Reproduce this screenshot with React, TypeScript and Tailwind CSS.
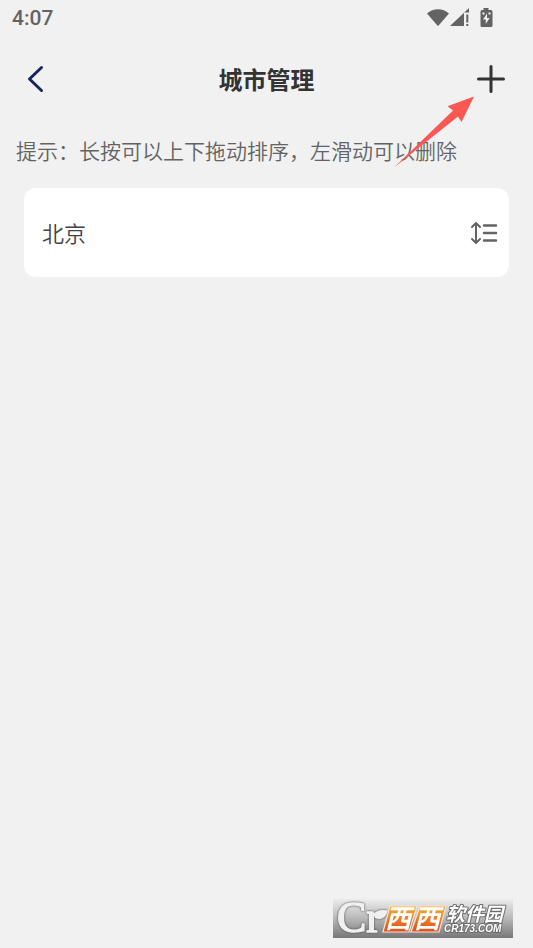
import React from 'react';

const cities = ['北京'];

const StatusBar: React.FC = () => (
  <div className="flex h-9 items-center justify-between pl-3 pr-[39px] text-[#636363]">
    <span className="font-[Roboto,'Noto_Sans',sans-serif] text-[21px] font-medium leading-9">4:07</span>
    <div className="flex items-center" aria-hidden="true">
      <svg className="h-5 w-6" viewBox="0 0 24 20" fill="currentColor">
        <path d="M1 5.600C7-.2 17-.2 23 5.600L12.600 17.600a.8.8 0 0 1-1.200 0Z" />
      </svg>
      <svg className="mr-2 h-5 w-5" viewBox="0 0 20 20" fill="currentColor">
        <path d="M0 18 19 0v4.500h-5V18Z" />
        <path d="M16.300 6.500h2v8h-2zM16.300 16h2v2h-2z" />
      </svg>
      <svg className="h-5 w-4" viewBox="0 0 16 20" fill="currentColor">
        <path
          fillRule="evenodd"
          d="M5.500 0h5v2H13q1.500 0 1.500 1.500v14q0 1.500-1.500 1.500H4q-1.500 0-1.500-1.500v-14Q2.500 2 4 2h1.500ZM4.500 4.500v2h2v-2Zm6 0v2h2v-2ZM9 5.500 5 11.500h2.800V16l3.800-6H9Z"
        />
      </svg>
    </div>
  </div>
);

const SortIcon: React.FC = () => (
  <svg className="h-6 w-7" viewBox="0 0 28 24" fill="none" stroke="#636363" strokeLinecap="round" strokeLinejoin="round">
    <path strokeWidth="2" d="M6 2v20M2 6l4-4 4 4M2 18l4 4 4-4" />
    <path strokeWidth="2.400" d="M14 4.500h12M14 12h12M14 19.500h12" />
  </svg>
);

const PointerArrow: React.FC = () => (
  <svg className="pointer-events-none absolute right-[59px] top-[60px] h-[72px] w-20" viewBox="0 0 80 72" fill="#fb5753" aria-hidden="true">
    <path d="M80 .5 53.500 10.200 59 14.500 0 71.500 64 20.500 67.500 26Z" />
  </svg>
);

const Watermark: React.FC = () => (
  <svg className="pointer-events-none fixed bottom-[10px] right-5 h-10 w-[180px] overflow-visible" viewBox="0 0 180 40">
    <defs>
      <linearGradient id="plate" x1="0" y1="0" x2="0" y2="1">
        <stop offset="0" stopColor="#f0f0f0" />
        <stop offset="0.5" stopColor="#b9b9b9" />
        <stop offset="1" stopColor="#777" />
      </linearGradient>
      <linearGradient id="tile" x1="0" y1="0" x2="0" y2="1">
        <stop offset="0" stopColor="#f6ae2b" />
        <stop offset="1" stopColor="#e34b1d" />
      </linearGradient>
    </defs>
    <rect width="180" height="40" fill="url(#plate)" />
    <g className="drop-shadow-[0_0_1px_#444]" fill="#f0f0f0" stroke="#f0f0f0" strokeWidth="1.500" strokeLinejoin="round">
      <text x="4" y="34" fontSize="44" fontFamily="'Liberation Serif', serif">Cr</text>
      <path d="M42 19c1-6 5-7 12-6-2 6-6 9-12 6Z" />
    </g>
    <g fill="url(#tile)" stroke="#f5e7d8" strokeWidth="1.200">
      <path d="M57 8h27l-8 26H50Z" />
      <path d="M87 8h26l-7 26H78Z" />
    </g>
    <g fill="#fff" fontFamily="'Noto Sans CJK SC', sans-serif" fontStyle="italic" fontWeight="700">
      <text x="52" y="30" fontSize="26">西</text>
      <text x="81" y="30" fontSize="26">西</text>
      <g stroke="#6c6c6c" strokeWidth="2" paintOrder="stroke" strokeLinejoin="round">
        <text x="113" y="23" fontSize="19">软件园</text>
        <text x="111" y="34" fontSize="10" fontFamily="'Liberation Sans', sans-serif">CR173.COM</text>
      </g>
    </g>
  </svg>
);

const App: React.FC = () => {
  return (
    <div className="min-h-screen bg-[#f1f1f1] font-['Noto_Sans_CJK_SC',sans-serif] text-[#333]">
      <StatusBar />

      <header className="relative flex h-[86px] items-center justify-between px-5">
        <button type="button" aria-label="返回" className="flex h-11 w-11 items-center">
          <svg className="h-7 w-7" viewBox="0 0 28 28" fill="none" stroke="#17275c" strokeWidth="3" strokeLinecap="round" strokeLinejoin="round">
            <path d="M21.500 2.500 9.500 14 21.500 25.500" />
          </svg>
        </button>
        <h1 className="text-2xl font-bold">城市管理</h1>
        <button type="button" aria-label="添加城市" className="flex h-11 w-11 items-center justify-center">
          <svg className="h-7 w-7" viewBox="0 0 28 28" fill="none" stroke="#333" strokeWidth="3" strokeLinecap="round">
            <path d="M14 1.500v25M1.500 14h25" />
          </svg>
        </button>
        <PointerArrow />
      </header>

      <main>
        <p className="mt-3 whitespace-nowrap pl-4 text-[21px] font-[350] leading-8 text-[#636363]">
          提示：长按可以上下拖动排序，左滑动可以删除
        </p>
        <ul className="mt-[22px] px-6">
          {cities.map((city) => (
            <li key={city} className="flex h-[89px] items-center justify-between rounded-xl bg-white pl-[18px] pr-[11px]">
              <span className="text-[22px] font-[350] text-[#444]">{city}</span>
              <button type="button" aria-label="拖动排序">
                <SortIcon />
              </button>
            </li>
          ))}
        </ul>
      </main>

      <Watermark />
    </div>
  );
};

export default App;
